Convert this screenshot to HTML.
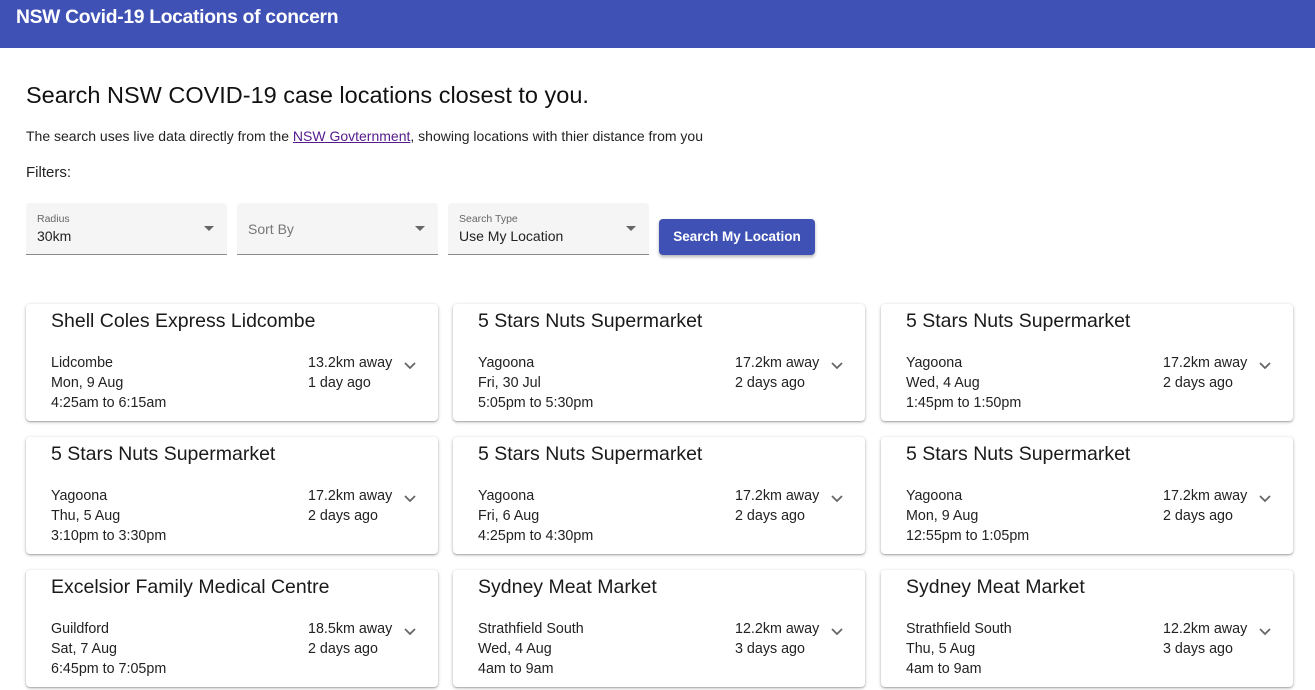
<!DOCTYPE html>
<html><head><meta charset="utf-8"><style>
*{box-sizing:border-box;margin:0;padding:0}
body{width:1315px;height:690px;overflow:hidden;background:#fff;font-family:"Liberation Sans",sans-serif;color:#1a1a1a}
.bar{height:48px;background:#3f51b5;color:#fff;font-size:19.3px;font-weight:bold;padding:7px 0 0 16px;letter-spacing:-0.3px}
h1{position:absolute;left:26px;top:82px;font-size:23.5px;font-weight:normal;color:#111}
.p{position:absolute;left:26px;top:128px;font-size:14px;color:#222}
.p a{color:#551a8b}
.f{position:absolute;left:26px;top:164px;font-size:15px;color:#222}
.sel{position:absolute;top:203px;width:201px;height:52px;background:#f5f5f5;border-bottom:1px solid #8a8a8a;border-radius:4px 4px 0 0}
.sel .l{position:absolute;left:11px;top:10px;font-size:10.5px;color:#666}
.sel .v{position:absolute;left:11px;top:25px;font-size:14px;color:#222}
.sel .v2{position:absolute;left:11px;top:18px;font-size:14px;color:#777}
.sel .ar{position:absolute;right:13px;top:23px;width:0;height:0;border-left:5px solid transparent;border-right:5px solid transparent;border-top:5px solid #666}
.btn{position:absolute;left:659px;top:219px;width:156px;height:36px;background:#3f51b5;color:#fff;font-size:13.5px;font-weight:bold;text-align:center;line-height:35px;border-radius:4px;box-shadow:0 2px 3px rgba(0,0,0,.3)}
.card{position:absolute;width:412px;height:117px;background:#fff;border-radius:4px;box-shadow:0 1px 3px rgba(0,0,0,.3),0 1px 1px rgba(0,0,0,.14)}
.card .t{position:absolute;left:25px;top:6px;font-size:19.5px;color:#1a1a1a}
.card .a{position:absolute;left:25px;top:49px;font-size:14.3px;line-height:20px;color:#222}
.card .b{position:absolute;left:282px;top:49px;font-size:14.3px;line-height:20px;color:#222}
.card svg{position:absolute;left:377px;top:57px}
</style></head><body>
<div class="bar">NSW Covid-19 Locations of concern</div>
<h1>Search NSW COVID-19 case locations closest to you.</h1>
<div class="p">The search uses live data directly from the <a href="#">NSW Govternment</a>, showing locations with thier distance from you</div>
<div class="f">Filters:</div>
<div class="sel" style="left:26px"><div class="l">Radius</div><div class="v">30km</div><div class="ar"></div></div>
<div class="sel" style="left:237px"><div class="v2">Sort By</div><div class="ar"></div></div>
<div class="sel" style="left:448px"><div class="l">Search Type</div><div class="v">Use My Location</div><div class="ar"></div></div>
<div class="btn">Search My Location</div>

<div class="card" style="left:26px;top:304px"><div class="t">Shell Coles Express Lidcombe</div><div class="a">Lidcombe<br>Mon, 9 Aug<br>4:25am to 6:15am</div><div class="b">13.2km away<br>1 day ago</div><svg width="14" height="9"><path d="M2 2l5 5 5-5" stroke="#666" stroke-width="1.8" fill="none"/></svg></div>
<div class="card" style="left:453px;top:304px"><div class="t">5 Stars Nuts Supermarket</div><div class="a">Yagoona<br>Fri, 30 Jul<br>5:05pm to 5:30pm</div><div class="b">17.2km away<br>2 days ago</div><svg width="14" height="9"><path d="M2 2l5 5 5-5" stroke="#666" stroke-width="1.8" fill="none"/></svg></div>
<div class="card" style="left:881px;top:304px"><div class="t">5 Stars Nuts Supermarket</div><div class="a">Yagoona<br>Wed, 4 Aug<br>1:45pm to 1:50pm</div><div class="b">17.2km away<br>2 days ago</div><svg width="14" height="9"><path d="M2 2l5 5 5-5" stroke="#666" stroke-width="1.8" fill="none"/></svg></div>

<div class="card" style="left:26px;top:437px"><div class="t">5 Stars Nuts Supermarket</div><div class="a">Yagoona<br>Thu, 5 Aug<br>3:10pm to 3:30pm</div><div class="b">17.2km away<br>2 days ago</div><svg width="14" height="9"><path d="M2 2l5 5 5-5" stroke="#666" stroke-width="1.8" fill="none"/></svg></div>
<div class="card" style="left:453px;top:437px"><div class="t">5 Stars Nuts Supermarket</div><div class="a">Yagoona<br>Fri, 6 Aug<br>4:25pm to 4:30pm</div><div class="b">17.2km away<br>2 days ago</div><svg width="14" height="9"><path d="M2 2l5 5 5-5" stroke="#666" stroke-width="1.8" fill="none"/></svg></div>
<div class="card" style="left:881px;top:437px"><div class="t">5 Stars Nuts Supermarket</div><div class="a">Yagoona<br>Mon, 9 Aug<br>12:55pm to 1:05pm</div><div class="b">17.2km away<br>2 days ago</div><svg width="14" height="9"><path d="M2 2l5 5 5-5" stroke="#666" stroke-width="1.8" fill="none"/></svg></div>

<div class="card" style="left:26px;top:570px"><div class="t">Excelsior Family Medical Centre</div><div class="a">Guildford<br>Sat, 7 Aug<br>6:45pm to 7:05pm</div><div class="b">18.5km away<br>2 days ago</div><svg width="14" height="9"><path d="M2 2l5 5 5-5" stroke="#666" stroke-width="1.8" fill="none"/></svg></div>
<div class="card" style="left:453px;top:570px"><div class="t">Sydney Meat Market</div><div class="a">Strathfield South<br>Wed, 4 Aug<br>4am to 9am</div><div class="b">12.2km away<br>3 days ago</div><svg width="14" height="9"><path d="M2 2l5 5 5-5" stroke="#666" stroke-width="1.8" fill="none"/></svg></div>
<div class="card" style="left:881px;top:570px"><div class="t">Sydney Meat Market</div><div class="a">Strathfield South<br>Thu, 5 Aug<br>4am to 9am</div><div class="b">12.2km away<br>3 days ago</div><svg width="14" height="9"><path d="M2 2l5 5 5-5" stroke="#666" stroke-width="1.8" fill="none"/></svg></div>
</body></html>
